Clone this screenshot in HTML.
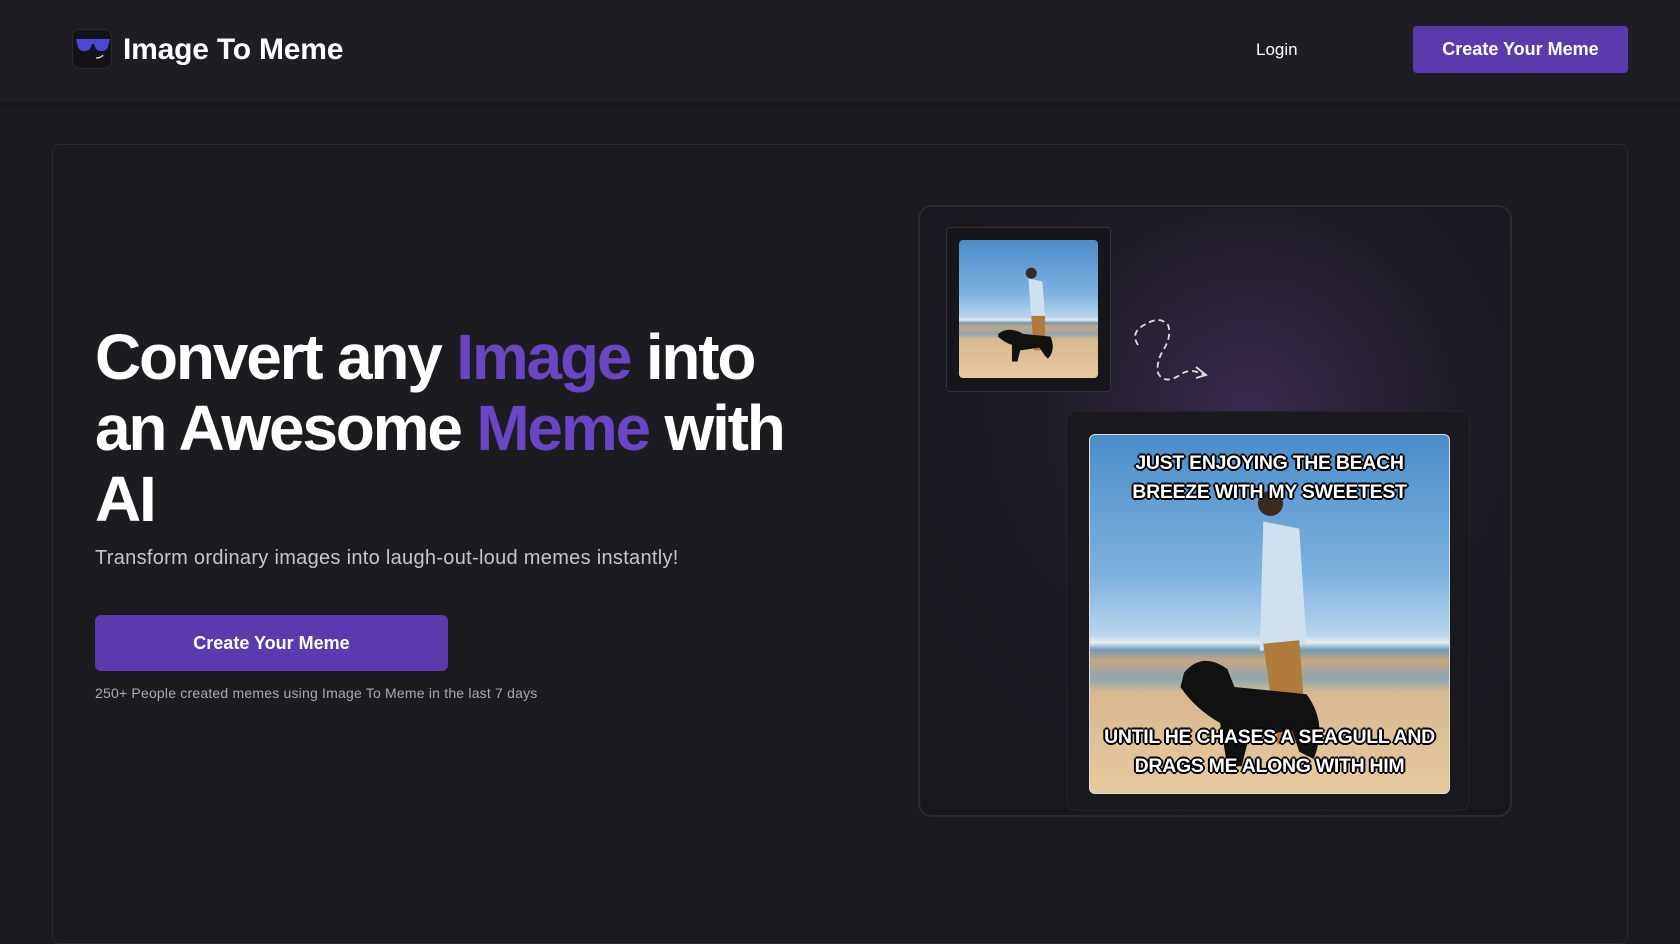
<!DOCTYPE html>
<html><head><meta charset="utf-8"><style>
*{margin:0;padding:0;box-sizing:border-box}
body{width:1680px;height:876px;overflow:hidden;background:#1c1b20;font-family:"Liberation Sans",sans-serif;color:#fff;position:relative}
.hdr{position:absolute;left:0;top:0;width:1680px;height:102px;background:#1e1d23;box-shadow:0 2px 6px rgba(0,0,0,.25)}
.logo{position:absolute;left:72px;top:29px;width:40px;height:40px;border-radius:8px;background:#141318;border:1px solid #2c2b32}
.brand{position:absolute;left:123px;top:33px;font-size:30px;font-weight:bold;letter-spacing:-.2px}
.login{position:absolute;left:1256px;top:40px;font-size:17px}
.btn{position:absolute;background:#5b3aad;border-radius:4px;font-weight:bold;text-align:center;color:#fff}
.card{position:absolute;left:52px;top:144px;width:1576px;height:800px;border:1.5px solid #2e2d33;border-radius:8px;background:#1c1b20}
h1{position:absolute;left:95px;top:322px;font-size:64px;line-height:71px;letter-spacing:-2.2px;font-weight:bold;white-space:nowrap}
h1 span{color:#6a45c4}
.sub{position:absolute;left:95px;top:547px;font-size:20px;color:#c5c5ca;letter-spacing:.3px}
.small{position:absolute;left:95px;top:685px;font-size:14px;color:#a9a9ae;letter-spacing:.2px}
.panel{position:absolute;left:918px;top:205px;width:594px;height:612px;border:2px solid #2c2b33;border-radius:14px;background:radial-gradient(circle at 330px 205px,rgba(110,70,160,.35),rgba(40,30,60,.15) 220px,#18171e 420px)}
.sf{position:absolute;left:946px;top:227px;width:165px;height:165px;border:1.5px solid #34333b;border-radius:4px;background:#17161c}
.lf{position:absolute;left:1066px;top:411px;width:404px;height:400px;border:1px solid #25242c;border-radius:10px;background:#1a1920}
.img{position:absolute;overflow:hidden;background:linear-gradient(#4a8cc9 0%,#7fb3e0 40%,#b9d6ec 56%,#e8eef2 58%,#6f9ab8 60%,#c7a77f 63%,#8fa6b3 68%,#d8b88e 72%,#e6caa0 100%)}
.mt{position:absolute;left:0;width:100%;text-align:center;font-weight:bold;font-size:19.5px;line-height:29px;color:#fff;letter-spacing:-.3px;text-shadow:-2px 0 #000,2px 0 #000,0 -2px #000,0 2px #000,-1px -1px #000,1px 1px #000,1px -1px #000,-1px 1px #000}
</style></head><body>
<div class="hdr">
<div class="logo"><svg width="40" height="40" viewBox="0 0 40 40"><path d="M3 9 H37 L35 17 Q33 22 27 21 Q22 20 21 14 H19 Q18 20 13 21 Q7 22 5 17 Z" fill="#4b48d8"/><path d="M23 28 Q28 28 30 25" stroke="#ddd" stroke-width="1.3" fill="none"/></svg></div>
<div class="brand">Image To Meme</div>
<div class="login">Login</div>
<div class="btn" style="left:1413px;top:26px;width:215px;height:47px;line-height:47px;font-size:18px">Create Your Meme</div>
</div>
<div class="card"></div>
<h1>Convert any <span>Image</span> into<br>an Awesome <span>Meme</span> with<br>AI</h1>
<div class="sub">Transform ordinary images into laugh-out-loud memes instantly!</div>
<div class="btn" style="left:95px;top:615px;width:353px;height:56px;line-height:56px;font-size:18px;border-radius:6px">Create Your Meme</div>
<div class="small">250+ People created memes using Image To Meme in the last 7 days</div>
<div class="panel"></div>
<div class="sf"></div>
<div class="img" style="left:959px;top:240px;width:139px;height:138px;border-radius:4px">
<svg width="139" height="138" viewBox="0 0 100 100" style="position:absolute;left:0;top:0"><path d="M50 28 L60 30 L62 55 L52 56 Z" fill="#cfe0ef"/><circle cx="52" cy="24" r="4" fill="#3a2a20"/><path d="M52 55 L62 55 L62 80 L54 80 Z" fill="#b07a3a"/><path d="M28 68 Q36 62 46 68 L66 70 Q70 80 64 86 L62 84 L58 78 L44 80 L42 88 L38 88 L38 76 Q32 74 28 70 Z" fill="#111"/></svg></div>
<svg style="position:absolute;left:1130px;top:305px" width="95" height="85" viewBox="0 0 95 85"><path d="M8 40 Q0 28 14 20 Q30 10 38 20 Q42 30 34 44 Q26 56 28 68 Q34 80 50 70 Q60 62 74 70" stroke="#ddd" stroke-width="1.8" fill="none" stroke-dasharray="6 4"/><path d="M66 62 L76 70 L66 73" stroke="#ddd" stroke-width="1.8" fill="none"/></svg>
<div class="lf"></div>
<div class="img" style="left:1089px;top:434px;width:361px;height:360px;border-radius:6px;border:1.5px solid #ddd">
<svg width="361" height="360" viewBox="0 0 100 100" style="position:absolute;left:0;top:0"><path d="M48 24 L58 26 L60 58 L47 60 Z" fill="#cfe0ef"/><circle cx="50" cy="19" r="3.5" fill="#3a2a20"/><path d="M48 58 L58 57 L60 84 L52 86 Z" fill="#b07a3a"/><path d="M26 66 Q31 60 38 65 L40 70 L60 72 Q66 80 62 90 L58 88 L56 82 L44 84 L42 92 L38 92 L36 80 Q29 76 25 70 Z" fill="#111"/></svg>
<div class="mt" style="top:14px">JUST ENJOYING THE BEACH<br>BREEZE WITH MY SWEETEST</div>
<div class="mt" style="top:288px">UNTIL HE CHASES A SEAGULL AND<br>DRAGS ME ALONG WITH HIM</div>
</div>
</body></html>
